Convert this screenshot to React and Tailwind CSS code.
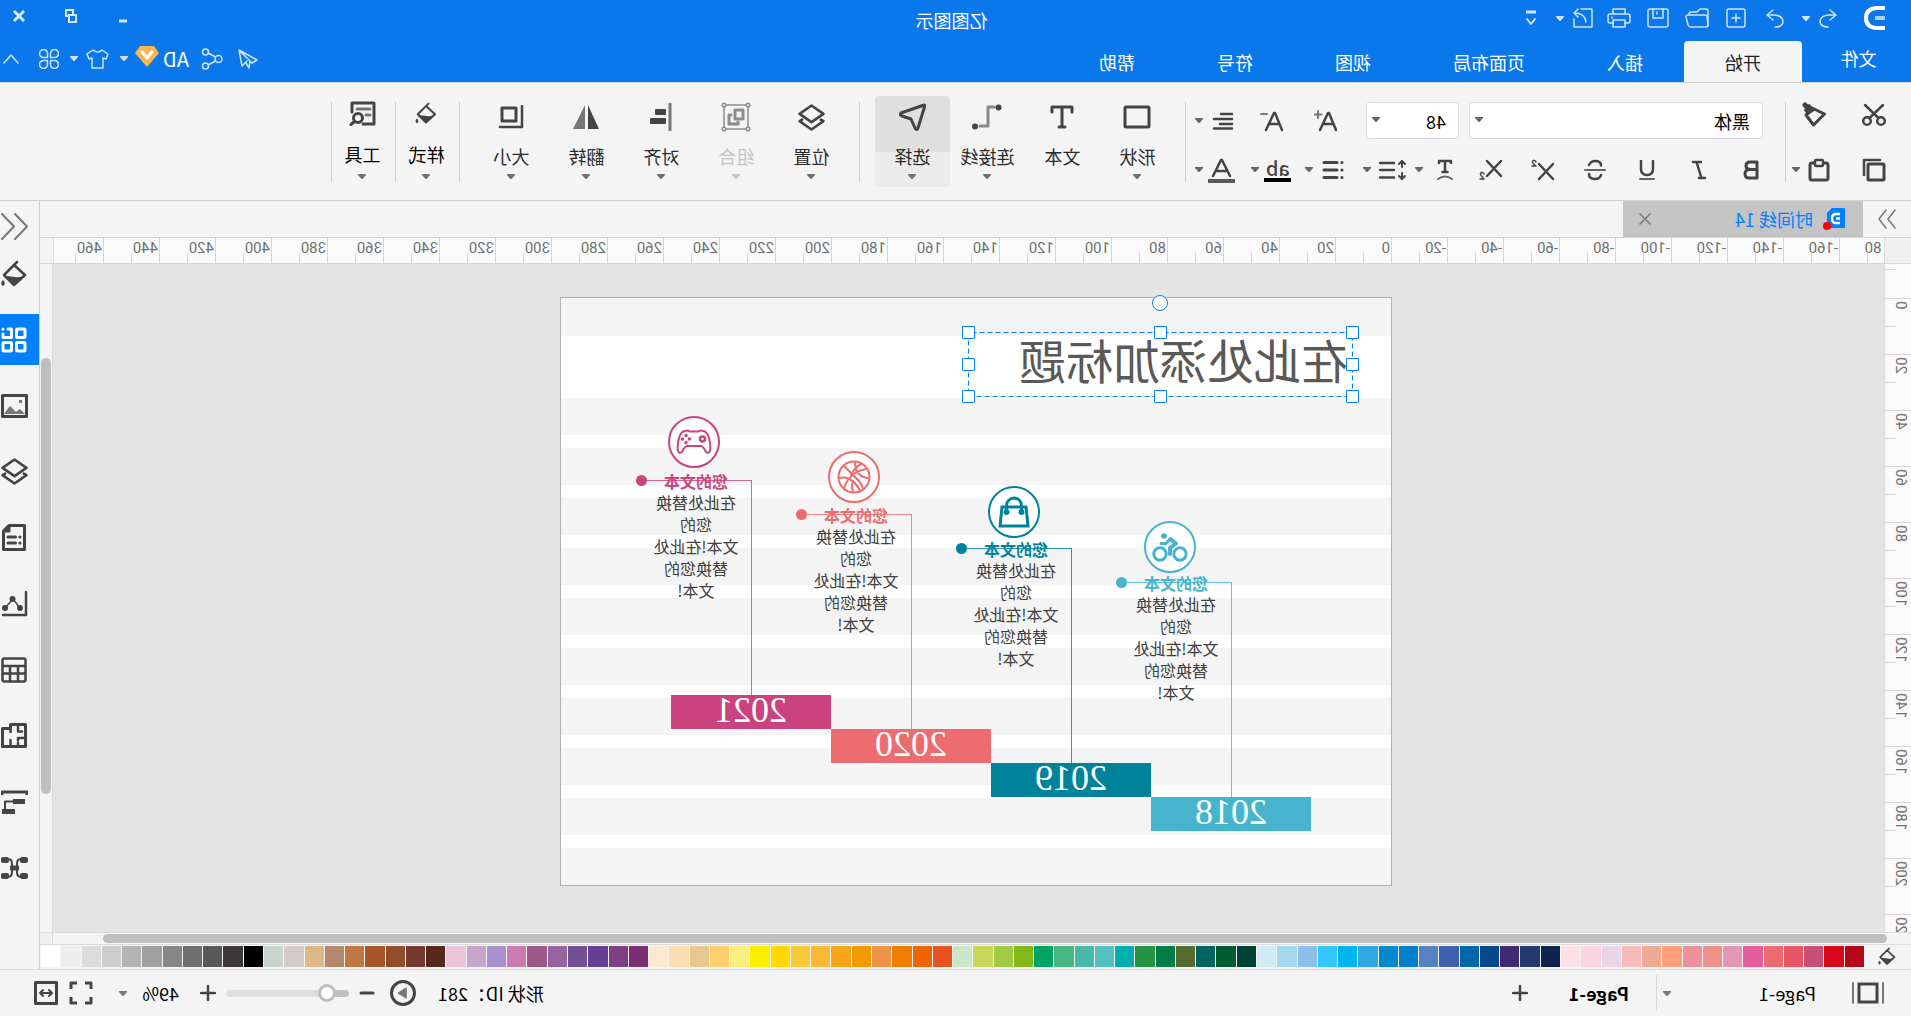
import { useState } from "react";
import clsx from "clsx";

const menuTabs = ["插入", "页面布局", "视图", "符号", "帮助"];

const timeline = [
    { year: "2018", color: "#46b4cd", left: 80, top: 280, iconLeft: 195, iconTop: 223, icon: "bike" },
    { year: "2019", color: "#00829b", left: 240, top: 246, iconLeft: 351, iconTop: 188, icon: "bag" },
    { year: "2020", color: "#ec6c70", left: 400, top: 212, iconLeft: 511, iconTop: 153, icon: "ball" },
    { year: "2021", color: "#cb437e", left: 560, top: 178, iconLeft: 671, iconTop: 118, icon: "gamepad" },
];

const palette = [
    "#b30818", "#d9081c", "#c75078", "#e85464", "#ec6b70", "#e55d9a", "#e397b4", "#ee8f88", "#f0909c", "#ffa07a",
    "#f0a993", "#f6bcbc", "#ead4e8", "#fdd4e4", "#fde0e6", "#0f234f", "#243970", "#402a74", "#04478c", "#0068a6",
    "#3f60ac", "#5583c2", "#0080cc", "#0089cf", "#2ea7e3", "#00b4f0", "#33c8fb", "#8cc0ea", "#a3d8ee", "#d0eaf6",
    "#004035", "#005b30", "#006560", "#566b30", "#007d45", "#259445", "#00aeb0", "#54c0c0", "#48b9a8", "#48b883",
    "#00a566", "#82b818", "#a0cb44", "#c8d75a", "#cbe6c8", "#e8521f", "#ec6500", "#ee7d00", "#ef9447", "#f39a00",
    "#f7a61c", "#fbb933", "#f9c938", "#ffd900", "#ffed00", "#fbee82", "#fecf70", "#e8c88f", "#fbddb0", "#fde8d0",
    "#7b2f72", "#803f83", "#654096", "#745196", "#97659e", "#9c5888", "#cc7bb0", "#a890cf", "#c6a5c8", "#ebc3da",
    "#58281c", "#743a30", "#924e2c", "#a85628", "#c07840", "#b4886e", "#deb887", "#d4ccc8", "#c9d4cc", "#000000",
    "#3e3939", "#595758", "#6f6f6f", "#878787", "#9ea09f", "#b2b5b4", "#cdcfce", "#dcdcdc", "#eeeeee", "#ffffff",
];

const hMarks = Array.from({ length: 33 }, (_, i) => -180 + i * 20);
const vMarks = Array.from({ length: 12 }, (_, i) => i * 20);

function Icon({ w = 24, h = 24, sw = 2, children, className }) {
    return (
        <svg
            width={w}
            height={h}
            viewBox={`0 0 ${w} ${h}`}
            fill="none"
            stroke="currentColor"
            strokeWidth={sw}
            strokeLinecap="round"
            strokeLinejoin="round"
            className={clsx("shrink-0", className)}
            aria-hidden="true"
        >
            {children}
        </svg>
    );
}

function Caret({ className }) {
    return (
        <svg width="8" height="5" viewBox="0 0 8 5" className={clsx("shrink-0", className)} aria-hidden="true">
            <path d="M0 0H8V1L4.500 5H3.500L0 1Z" fill="currentColor" />
        </svg>
    );
}

function IconButton({ label, className, children }) {
    return (
        <button aria-label={label} className={clsx("flex items-center justify-center", className)}>
            {children}
        </button>
    );
}

function Divider() {
    return <div className="mt-[19px] h-20 w-px shrink-0 bg-[#cfcfcf]" />;
}

const FillBucket = ({ w = 26, h = 28 }) => (
    <svg width={w} height={h} viewBox="0 0 26 28" fill="none" stroke="currentColor" strokeWidth="2.500" strokeLinejoin="round" strokeLinecap="round" className="shrink-0" aria-hidden="true">
        <path d="M10 2L13 5M13 5L23 15L13 25L2 15Z" />
        <path d="M2 15.500Q7 18 12 17Q18 16 23.500 16L13 26Z" fill="currentColor" stroke="none" />
        <path d="M24 21Q26 24 24 25Q22 24 24 21Z" fill="currentColor" strokeWidth="1.500" />
    </svg>
);

const Layers = ({ w = 26 }) => (
    <svg width={w} height={w} viewBox="0 0 26 26" fill="none" stroke="currentColor" strokeWidth="2.500" strokeLinejoin="round" strokeLinecap="round" className="shrink-0" aria-hidden="true">
        <path d="M13 1.500L24.500 9.500L13 17.500L1.500 9.500Z" />
        <path d="M4 15L1.500 16.500L13 24.500L24.500 16.500L22 15" />
    </svg>
);

function TitleBar() {
    return (
        <div className="flex h-9 items-center">
            <div className="flex flex-1 items-center">
                <Icon w={22} h={24} sw={4} className="ml-[25px] mr-[19px] text-white">
                    <path d="M1 2H10Q20 3 20 12Q20 21 10 22H1" strokeLinecap="butt" />
                    <path d="M1 12H11" stroke="#a9d0f8" strokeLinecap="butt" />
                </Icon>
                <div className="flex items-center text-[#cfe4fb]">
                    <IconButton label="撤销" className="w-[33px]">
                        <Icon w={18} h={20} sw={1.5}>
                            <path d="M7 2L1 7L7 12M1 7H9Q17 8 17 14Q16 19 9 19" />
                        </Icon>
                    </IconButton>
                    <IconButton label="撤销列表" className="w-3"><Caret /></IconButton>
                    <IconButton label="恢复" className="ml-1.5 w-[38px]">
                        <Icon w={18} h={20} sw={1.5}>
                            <path d="M11 2L17 7L11 12M17 7H9Q1 8 1 14Q2 19 9 19" />
                        </Icon>
                    </IconButton>
                    <IconButton label="新建" className="w-[39px]">
                        <Icon w={20} h={20} sw={1.5}>
                            <rect x="1" y="1" width="18" height="18" rx="2" />
                            <path d="M10 6V14M6 10H14" />
                        </Icon>
                    </IconButton>
                    <IconButton label="打开" className="w-[39px]">
                        <Icon w={24} h={20} sw={1.5}>
                            <path d="M1 17V3Q1 1 3 1H9L12 4H18Q20 4 20 7" />
                            <path d="M4 7H21Q23 7 23 9L21 17Q20 19 18 19H3Q1 19 1 17L2 9Q2 7 4 7Z" />
                        </Icon>
                    </IconButton>
                    <IconButton label="保存" className="w-[39px]">
                        <Icon w={22} h={20} sw={1.5}>
                            <rect x="1" y="1" width="20" height="18" rx="2" />
                            <path d="M6 1V10H16V1M12 4V6" />
                        </Icon>
                    </IconButton>
                    <IconButton label="打印" className="w-[39px]">
                        <Icon w={24} h={20} sw={1.5}>
                            <path d="M6 6V1H18V6M6 15H3Q1 15 1 13V8Q1 6 3 6H21Q23 6 23 8V13Q23 15 21 15H18" />
                            <rect x="6" y="12" width="12" height="7" />
                            <path d="M19 9V10" />
                        </Icon>
                    </IconButton>
                    <IconButton label="导出" className="w-[34px]">
                        <Icon w={20} h={20} sw={1.5}>
                            <path d="M12 1H1V19H19V11M15 1L19 5L15 9M19 5Q8 5 7 14" />
                        </Icon>
                    </IconButton>
                    <IconButton label="导出选项" className="w-3"><Caret /></IconButton>
                    <IconButton label="自定义" className="w-[46px]">
                        <Icon w={12} h={16}>
                            <path d="M1 2H11" strokeLinecap="butt" strokeWidth="3" />
                            <path d="M2 9L6 14L10 9" />
                        </Icon>
                    </IconButton>
                </div>
            </div>
            <h1 className="pl-2 pt-1 text-lg leading-6 text-white">亿图图示</h1>
            <div className="flex flex-1 items-center justify-end text-[#d6e8fc]">
                <IconButton label="最小化" className="h-7 w-10">
                    <Icon w={10} h={12} sw={3}><path d="M1 9H9" strokeLinecap="butt" /></Icon>
                </IconButton>
                <IconButton label="还原" className="ml-3 h-7 w-10 pb-1">
                    <Icon w={12} h={14}>
                        <rect x="4" y="1" width="7" height="6" strokeLinejoin="miter" />
                        <rect x="1" y="6" width="7" height="7" fill="#0a78eb" strokeLinejoin="miter" />
                    </Icon>
                </IconButton>
                <IconButton label="关闭" className="mr-px ml-2.5 h-7 w-10 pb-1 pl-1">
                    <Icon w={12} h={12} sw={3}><path d="M2 2L10 10M10 2L2 10" strokeLinecap="square" /></Icon>
                </IconButton>
            </div>
        </div>
    );
}

function MenuBar() {
    return (
        <nav className="flex h-[46px] items-end text-lg text-white">
            <button className="h-full w-[109px] pb-0.5 pr-1">文件</button>
            <button className="h-[41px] w-[118px] shrink-0 rounded-t-sm bg-[#f4f4f4] text-[#222]">开始</button>
            {menuTabs.map((tab) => (
                <button key={tab} className="h-[41px] shrink-0 px-[41px]">{tab}</button>
            ))}
            <div className="ml-auto flex h-full items-center pb-px pr-[3px] text-[#cfe4fb]">
                <IconButton label="发送">
                    <Icon w={20} h={20} sw={1.5}>
                        <path d="M19 1L1 11L6 14L19 1L16 17L11 12M8 12L9 19L12 14" />
                    </Icon>
                </IconButton>
                <IconButton label="分享" className="ml-[15px]">
                    <Icon w={22} h={22} sw={1.5}>
                        <circle cx="4.500" cy="11" r="3.500" />
                        <circle cx="17.500" cy="4" r="3" />
                        <circle cx="17.500" cy="18" r="3" />
                        <path d="M7.500 9L15 5M7.500 13L15 17" />
                    </Icon>
                </IconButton>
                <button className="ml-3 text-xl leading-6 text-white">AD</button>
                <IconButton label="会员" className="ml-1 pb-1">
                    <Icon w={24} h={22} sw={3}>
                        <path d="M5 0H19L24 7L12 21L0 7Z" fill="#f8b84e" stroke="none" />
                        <path d="M7 6L12 12L17 6" stroke="#fff" />
                    </Icon>
                </IconButton>
                <IconButton label="会员菜单" className="ml-[7px]"><Caret /></IconButton>
                <IconButton label="皮肤" className="ml-[11px]">
                    <Icon w={23} h={20} sw={1.5}>
                        <path d="M7 1Q11 5 16 1L22 5L20 10L17 9V19H6V9L3 10L1 5Z" />
                    </Icon>
                </IconButton>
                <IconButton label="皮肤菜单" className="ml-2"><Caret /></IconButton>
                <IconButton label="应用" className="ml-[11px]">
                    <Icon w={20} h={20} sw={1.5}>
                        <path d="M8.500 8.500H5A4 4 0 1 1 8.500 5ZM11.500 8.500V5A4 4 0 1 1 15 8.500ZM8.500 11.500V15A4 4 0 1 1 5 11.500ZM11.500 11.500H15A4 4 0 1 1 11.500 15Z" />
                    </Icon>
                </IconButton>
                <IconButton label="收起功能区" className="ml-5">
                    <Icon w={16} h={10} sw={1.5}><path d="M1 9L8 1L15 9" /></Icon>
                </IconButton>
            </div>
        </nav>
    );
}

function ToolButton({ label, caret = true, active, disabled, compact, children }) {
    return (
        <button
            disabled={disabled}
            className={clsx(
                "mt-[13px] flex h-[91px] shrink-0 flex-col items-center rounded-sm",
                compact ? "w-[63px] pl-0.5 text-black" : "w-[75px] text-[#2b2b2b]",
                active && "bg-[linear-gradient(#dfdfdf_56px,#ebebeb_56px)]"
            )}
        >
            <span className={clsx("flex items-center justify-center text-[#444]", compact ? "h-[34px]" : "h-[42px]")}>
                {children}
            </span>
            <span className={clsx("text-lg leading-6", compact ? "mt-3" : "mt-1.5", disabled && "text-[#c4c4c4]")}>{label}</span>
            {caret && <Caret className={clsx(compact ? "mt-2" : "mt-1.5", disabled ? "text-[#c4c4c4]" : "text-[#707070]")} />}
        </button>
    );
}

function ClipboardGroup() {
    return (
        <div className="flex w-[125px] shrink-0 flex-col gap-3 pl-[21px] pt-[19px] text-[#444]">
            <div className="flex h-[37px] items-center">
                <IconButton label="剪切" className="w-8 pb-3">
                    <Icon w={24} h={24}>
                        <circle cx="5" cy="18" r="3.800" strokeWidth="2.500" />
                        <circle cx="19" cy="18" r="3.800" strokeWidth="2.500" />
                        <path d="M3 2L16.500 15M21 2L7.500 15" strokeWidth="2.500" />
                    </Icon>
                </IconButton>
                <IconButton label="格式刷" className="ml-7 w-8 pb-3">
                    <Icon w={24} h={25}>
                        <path d="M1.500 12L14 6L20 13L12.500 23Z" strokeWidth="3" />
                        <path d="M12 8L17 3L21 8L18 12Z" fill="currentColor" />
                        <path d="M18 6L21 3" strokeWidth="5" />
                    </Icon>
                </IconButton>
            </div>
            <div className="flex h-[37px] items-center">
                <IconButton label="复制" className="w-8">
                    <Icon w={24} h={24} sw={3}>
                        <rect x="2" y="6" width="16" height="16" rx="1" />
                        <path d="M6 2H22V17" strokeWidth="2.500" />
                    </Icon>
                </IconButton>
                <IconButton label="粘贴" className="ml-[23px] w-8">
                    <Icon w={22} h={24} sw={3}>
                        <rect x="2" y="5" width="18" height="17" rx="2" />
                        <rect x="7" y="2" width="8" height="6" rx="1" strokeWidth="2.500" fill="#f4f4f4" />
                    </Icon>
                </IconButton>
                <IconButton label="粘贴选项" className="w-3.5 text-[#666]"><Caret /></IconButton>
            </div>
        </div>
    );
}

function FontGroup() {
    const [font, setFont] = useState("黑体");
    const [size, setSize] = useState("48");

    return (
        <div className="flex w-[599px] shrink-0 flex-col gap-3 pl-2 pt-[19px] text-[#444]">
            <div className="ml-3.5 flex h-[37px] items-center">
                <div className="relative">
                    <select
                        aria-label="字体"
                        value={font}
                        onChange={(e) => setFont(e.target.value)}
                        className="h-[37px] w-[294px] appearance-none rounded-sm border border-[#dcdcdc] bg-white pl-3 text-lg text-black"
                    >
                        <option>黑体</option>
                        <option>宋体</option>
                    </select>
                    <Caret className="pointer-events-none absolute right-1.5 top-[15px] text-[#666]" />
                </div>
                <div className="relative ml-2.5">
                    <select
                        aria-label="字号"
                        value={size}
                        onChange={(e) => setSize(e.target.value)}
                        className="h-[37px] w-[93px] appearance-none rounded-sm border border-[#dcdcdc] bg-white pl-3 text-lg text-black"
                    >
                        <option>48</option>
                        <option>36</option>
                    </select>
                    <Caret className="pointer-events-none absolute right-1.5 top-[15px] text-[#666]" />
                </div>
                <IconButton label="增大字号" className="ml-6 w-8">
                    <Icon w={24} h={22} sw={2.5}>
                        <path d="M2 20L9 3H10L18 20M5 14H15" />
                        <path d="M20 1V8M16.500 4.500H23.500" stroke="#777" strokeWidth="2" />
                    </Icon>
                </IconButton>
                <IconButton label="减小字号" className="ml-[22px] w-8">
                    <Icon w={24} h={22} sw={2.5}>
                        <path d="M2 20L9 3H10L18 20M5 14H15" />
                        <path d="M17 4H23" stroke="#777" strokeWidth="2" />
                    </Icon>
                </IconButton>
                <IconButton label="对齐方式" className="ml-[17px] w-8">
                    <Icon w={22} h={18} sw={2.5}>
                        <path d="M2 2H13M2 7H20M2 12H14M2 16.500H20" />
                    </Icon>
                </IconButton>
                <IconButton label="对齐选项" className="w-4 text-[#666]"><Caret /></IconButton>
            </div>
            <div className="flex h-[37px] items-center">
                <IconButton label="加粗" className="w-[52px]">
                    <Icon w={16} h={20} sw={3}><path d="M2 2H9Q13 2 13 6Q13 9 9 9.500H2ZM2 9.500H10Q14 10 14 14Q14 18 10 18H2Z" /></Icon>
                </IconButton>
                <IconButton label="倾斜" className="w-[52px]">
                    <Icon w={16} h={20} sw={2.5}><path d="M6 2H14M2 18H8M10.500 2L5.500 18" /></Icon>
                </IconButton>
                <IconButton label="下划线" className="w-[52px]">
                    <Icon w={16} h={20}><path d="M2 1V9Q2 15 8 15Q14 15 14 9V1" strokeWidth="2.500" /><path d="M1 19H15" stroke="#666" /></Icon>
                </IconButton>
                <IconButton label="删除线" className="w-[52px]">
                    <Icon w={22} h={22} sw={2.5}>
                        <path d="M17 6Q15 2 11 2Q5 2 5 6.500M17 15Q17 20 11 20Q6 20 5 16" />
                        <path d="M1 11H21" strokeWidth="2" stroke="#666" />
                    </Icon>
                </IconButton>
                <IconButton label="上标" className="w-[52px]">
                    <Icon w={24} h={22} sw={2.5}>
                        <path d="M2 5L16 20M16 5L2 20" />
                        <path d="M19 3Q21 0 22.500 2.500Q23 4 19 7H23" strokeWidth="1.500" />
                    </Icon>
                </IconButton>
                <IconButton label="下标" className="w-[52px]">
                    <Icon w={24} h={22} sw={2.5}>
                        <path d="M2 2L16 17M16 2L2 17" />
                        <path d="M19 15Q21 12 22.500 14.500Q23 16 19 20H23" strokeWidth="1.500" />
                    </Icon>
                </IconButton>
                <IconButton label="文字效果" className="w-10">
                    <Icon w={18} h={22} sw={2.500}>
                        <path d="M3 4V2H15V4M9 2V12M6.500 13H11.500" />
                        <path d="M2 20Q9 15 16 20" strokeWidth="2" stroke="#666" />
                    </Icon>
                </IconButton>
                <IconButton label="文字效果选项" className="w-3 text-[#666]"><Caret /></IconButton>
                <IconButton label="行距" className="w-10">
                    <Icon w={28} h={22} sw={2.5}>
                        <path d="M5 2V8M5 20V14" strokeWidth="2" />
                        <path d="M2 5L5 2L8 5M2 17L5 20L8 17" strokeWidth="2" />
                        <path d="M13 4H27M13 11H27M13 18.500H27" />
                    </Icon>
                </IconButton>
                <IconButton label="行距选项" className="w-3 text-[#666]"><Caret /></IconButton>
                <IconButton label="项目符号" className="ml-2.5 w-9">
                    <Icon w={22} h={20} sw={3}>
                        <path d="M2 2.500H2.100M2 10H2.100M2 17.500H2.100M7 2.500H20M7 10H20M7 17.500H20" />
                    </Icon>
                </IconButton>
                <IconButton label="项目符号选项" className="w-3 text-[#666]"><Caret /></IconButton>
                <button aria-label="突出显示" className="ml-2 w-[34px]">
                    <span className="mx-auto block w-[27px] border-b-4 border-black text-center text-xl font-medium leading-5">ab</span>
                </button>
                <IconButton label="突出显示选项" className="w-3 text-[#666]"><Caret /></IconButton>
                <IconButton label="字体颜色" className="ml-2.5 w-[34px]">
                    <Icon w={27} h={26} sw={3}>
                        <path d="M5 19L13 3H14L22 19M8 14H19" strokeWidth="2.500" />
                        <path d="M0 24H27" strokeWidth="4" strokeLinecap="butt" stroke="#595959" />
                    </Icon>
                </IconButton>
                <IconButton label="字体颜色选项" className="w-3 text-[#666]"><Caret /></IconButton>
            </div>
        </div>
    );
}

function Ribbon() {
    return (
        <div className="flex h-[119px] shrink-0 border-y border-[#d0d0d0] bg-[#f4f4f4]">
            <ClipboardGroup />
            <Divider />
            <FontGroup />
            <Divider />
            <div className="ml-2.5 mr-[15px] flex">
                <ToolButton label="形状">
                    <Icon w={28} h={24} sw={3}><rect x="2" y="2" width="24" height="20" rx="1" strokeLinejoin="miter" /></Icon>
                </ToolButton>
                <ToolButton label="文本" caret={false}>
                    <Icon w={24} h={24} sw={3}><path d="M2 7V2H22V7M12 2V22M9 22H15" /></Icon>
                </ToolButton>
                <ToolButton label="连接线">
                    <Icon w={30} h={26}>
                        <path d="M8 3H14V22H22" stroke="#888" strokeWidth="3" />
                        <circle cx="3.500" cy="3.500" r="3" fill="currentColor" stroke="none" />
                        <circle cx="27" cy="22.500" r="3" fill="currentColor" stroke="none" />
                    </Icon>
                </ToolButton>
                <ToolButton label="选择" active>
                    <Icon w={27} h={28} sw={3}><path d="M2 2L25 10Q27 12 24 13L15 16L11 25Q9 28 8 25L1.500 4Q1 2 2 2Z" /></Icon>
                </ToolButton>
            </div>
            <Divider />
            <div className="ml-2.5 mr-3.5 flex">
                <ToolButton label="位置"><Layers w={27} /></ToolButton>
                <ToolButton label="组合" disabled>
                    <Icon w={30} h={30} sw={1.5} className="text-[#8c8c8c]">
                        <path d="M4 3H26M4 27H26M3 4V26M27 4V26" />
                        <circle cx="3" cy="3" r="1.800" fill="#f4f4f4" />
                        <circle cx="27" cy="3" r="1.800" fill="#f4f4f4" />
                        <circle cx="3" cy="27" r="1.800" fill="#f4f4f4" />
                        <circle cx="27" cy="27" r="1.800" fill="#f4f4f4" />
                        <rect x="8" y="8" width="8" height="9" strokeWidth="3" />
                        <path d="M20 13H22V22H13V20" strokeWidth="3" />
                    </Icon>
                </ToolButton>
                <ToolButton label="对齐">
                    <Icon w={22} h={28}>
                        <path d="M2 1V27" stroke="#777" strokeWidth="3" />
                        <rect x="6" y="6" width="11" height="6" rx="1" fill="currentColor" stroke="none" />
                        <rect x="6" y="15" width="16" height="6" rx="1" fill="currentColor" stroke="none" />
                    </Icon>
                </ToolButton>
                <ToolButton label="翻转">
                    <Icon w={28} h={26}>
                        <path d="M12 1V25H1Z" fill="currentColor" stroke="none" />
                        <path d="M15 1V25H27Z" fill="#777" stroke="none" />
                    </Icon>
                </ToolButton>
                <ToolButton label="大小">
                    <Icon w={26} h={24} sw={3}>
                        <rect x="8" y="3" width="14" height="13" />
                        <path d="M2 1V22H24" strokeWidth="2.500" />
                    </Icon>
                </ToolButton>
            </div>
            <Divider />
            <ToolButton label="样式" compact><FillBucket w={22} h={23} /></ToolButton>
            <Divider />
            <ToolButton label="工具" compact>
                <Icon w={27} h={25} sw={3}>
                    <path d="M13 23H2V2H24V11" />
                    <path d="M6 8H19M6 14H10" stroke="#777" />
                    <circle cx="18" cy="17" r="4.500" />
                    <path d="M21.500 20.500L25 23.500" />
                </Icon>
            </ToolButton>
            <Divider />
        </div>
    );
}

function DocumentTabs() {
    return (
        <div className="flex h-[37px] shrink-0 items-stretch border-b border-[#d6d6d6]">
            <IconButton label="展开左侧面板" className="w-12 text-[#777]">
                <Icon w={18} h={20} sw={1.5}><path d="M1 1L8 10L1 19M10 1L17 10L10 19" /></Icon>
            </IconButton>
            <div className="flex w-60 items-center bg-[#c4c4c4] pl-[18px] pr-4 text-lg text-[#0080ff]">
                <Icon w={22} h={22}>
                    <path d="M1 0H13L18 5V20H0V1Z" fill="#0080ff" stroke="none" />
                    <path d="M5 6H9Q13 6 13 10.500Q13 15 9 15H5M5 10.500H9" stroke="#fff" strokeWidth="2.500" strokeLinecap="butt" />
                    <circle cx="18" cy="18" r="4" fill="#f00" stroke="none" />
                </Icon>
                <button className="ml-2.5">时间线 14</button>
                <IconButton label="关闭标签" className="ml-auto text-[#777]">
                    <Icon w={12} h={12} sw={1.5}><path d="M1 1L11 11M11 1L1 11" /></Icon>
                </IconButton>
            </div>
        </div>
    );
}

function HorizontalRuler() {
    return (
        <div className="flex h-[26px] shrink-0 border-b border-[#d6d6d6]">
            <div className="w-[26px] shrink-0 bg-[#efefef]" />
            <div className="flex flex-1 overflow-hidden border-x border-[#dcdcdc] bg-[#fafafa]">
                <div className="-ml-3 flex">
                    {hMarks.map((mark) => (
                        <div key={mark} className="relative w-14 shrink-0 border-l border-[#d6d6d6] pl-px pt-px font-[Roboto,sans-serif] text-[15px] leading-[18px] text-[#707070]">
                            {mark}
                            <span className="absolute bottom-0 left-[27px] h-[11px] w-px bg-[#d6d6d6]" />
                        </div>
                    ))}
                </div>
            </div>
            <div className="w-[13px] shrink-0" />
        </div>
    );
}

function VerticalRuler() {
    return (
        <div className="w-[27px] shrink-0 overflow-hidden border-r border-[#dcdcdc] bg-[#fafafa]">
            <div className="mb-[28px] ml-auto mt-[5px] h-px w-[11px] bg-[#d6d6d6]" />
            {vMarks.map((mark) => (
                <div key={mark} className="relative flex h-14 flex-col items-start border-t border-[#d6d6d6] pl-px pt-0.5">
                    <span className="rotate-180 font-[Roboto,sans-serif] text-[15px] leading-[18px] text-[#707070] [writing-mode:vertical-rl]">
                        {mark}
                    </span>
                    <span className="absolute right-0 top-[27px] h-px w-[11px] bg-[#d6d6d6]" />
                </div>
            ))}
        </div>
    );
}

function TimelineIcon({ name }) {
    if (name === "bike") {
        return (
            <Icon w={36} h={30} sw={3}>
                <circle cx="8" cy="22" r="6.200" />
                <circle cx="28" cy="22" r="6.200" />
                <circle cx="24" cy="4" r="2.800" fill="currentColor" stroke="none" />
                <path d="M17.500 7L12 11.500L18 16V22" strokeWidth="4" />
                <path d="M18 7L22 11.500H27" />
            </Icon>
        );
    }
    if (name === "bag") {
        return (
            <Icon w={32} h={32} sw={3}>
                <path d="M4 11H28L30 30H2Z" strokeLinejoin="miter" />
                <path d="M8.500 16V9.500A7.500 7.500 0 0 1 23.500 9.500V16" />
                <circle cx="8.500" cy="16" r="1.500" fill="currentColor" />
                <circle cx="23.500" cy="16" r="1.500" fill="currentColor" />
            </Icon>
        );
    }
    if (name === "ball") {
        return (
            <Icon w={34} h={34}>
                <circle cx="17" cy="17" r="15.500" />
                <path d="M16 2Q16 10 12 14Q8 18 2 18M27 6Q20 13 12 21Q9 24 8 29M5 9Q17 11 23 20Q27 26 27 29M10 4Q16 7 20 15M32 18Q24 16 17 22Q12 28 11 31M18 21Q20 26 18 32" />
            </Icon>
        );
    }
    return (
        <Icon w={36} h={28}>
            <path d="M9 3Q11 2 14 3.500H22Q25 2 27 3Q31 3 33 10Q35 17 34 23Q33 26 30 24Q27 18 25 18H11Q9 18 6 24Q3 26 2 23Q1 17 3 10Q5 3 9 3Z" />
            <circle cx="9.500" cy="11" r="2.500" strokeWidth="2.500" />
            <path d="M26 7.500V7.600M26 14.500V14.600M22.500 11H22.600M29.500 11H29.600" strokeWidth="3.500" />
        </Icon>
    );
}

function TimelineItem({ year, color, left, top, iconLeft, iconTop, icon }) {
    return (
        <>
            {/* connector with its end dot */}
            <div className="absolute h-[221px] w-[116px]" style={{ left: left + 79, top, color }}>
                <div className="mt-1 h-[215px] w-28 border-l border-t border-current opacity-80" />
                <div className="absolute -top-px right-0 size-[11px] rounded-full bg-current" />
            </div>
            <div className="absolute flex size-[52px] items-center justify-center rounded-full border-2 border-current bg-white" style={{ left: iconLeft, top: iconTop, color }}>
                <TimelineIcon name={icon} />
            </div>
            <div className="absolute w-24 text-center text-base leading-[22px] text-[#404040]" style={{ left: left + 87, top: top - 6 }}>
                <p className="h-[21px] font-bold" style={{ color }}>您的文本</p>
                <p>在此处替换<br />您的<br />文本!在此处<br />替换您的<br />文本!</p>
            </div>
            <div
                className="absolute h-[34px] w-40 text-center font-['Liberation_Serif',serif] text-4xl leading-[30px] text-white"
                style={{ left, top: top + 219, backgroundColor: color }}
            >
                {year}
            </div>
        </>
    );
}

function Handle({ className }) {
    return <span className={clsx("absolute size-[13px] rounded-[1px] border border-[#0080ff] bg-white", className)} />;
}

function Canvas() {
    return (
        <main className="relative min-w-0 flex-1 overflow-hidden bg-[#e4e4e4]">
            <div className="absolute left-[492px] top-[33px] h-[589px] w-[832px] border border-[#b0b0b0] bg-white">
                <div className="flex h-full flex-col overflow-hidden">
                    <div className="h-[38px] shrink-0 bg-[#f4f4f4]" />
                    <div className="h-[62px] shrink-0" />
                    {Array.from({ length: 10 }, (_, i) => (
                        <div key={i} className="mb-[13px] h-[37px] shrink-0 bg-[#f4f4f4]" />
                    ))}
                </div>
                {timeline.map((item) => (
                    <TimelineItem key={item.year} {...item} />
                ))}
                <div className="absolute left-[38px] top-[34px] h-[65px] w-[385px]">
                    <h2 className="ml-[5px] h-[61px] whitespace-nowrap text-[47px] leading-[54px] text-[#595959]">在此处添加标题</h2>
                    <svg className="absolute inset-0 size-full" aria-hidden="true">
                        <path d="M.5 .5H384.500V64.500H.5Z" fill="none" stroke="#0080ff" strokeDasharray="5 3" />
                    </svg>
                    <span className="absolute -top-[37px] left-[185px] size-4 rounded-full border border-[#0080ff] bg-white" />
                    <Handle className="-left-1.5 -top-1.5" />
                    <Handle className="-top-1.5 left-[186px]" />
                    <Handle className="-right-1.5 -top-1.5" />
                    <Handle className="-left-1.5 top-[26px]" />
                    <Handle className="-right-1.5 top-[26px]" />
                    <Handle className="-bottom-1.5 -left-1.5" />
                    <Handle className="-bottom-1.5 left-[186px]" />
                    <Handle className="-bottom-1.5 -right-1.5" />
                </div>
            </div>
        </main>
    );
}

function Palette() {
    return (
        <div className="flex h-6 shrink-0 items-start pr-px pt-px">
            <div className="flex h-[21px] w-[47px] items-center justify-center text-[#444]">
                <FillBucket w={18} h={19} />
            </div>
            <div className="flex flex-1 gap-px">
                {palette.map((c) => (
                    <button key={c} aria-label={c} className="h-[21px] flex-1" style={{ backgroundColor: c }} />
                ))}
            </div>
        </div>
    );
}

const panelTools = [
    { name: "填充", icon: <FillBucket /> },
    {
        name: "符号库",
        active: true,
        icon: (
            <Icon w={26} h={26} sw={3}>
                <rect x="2" y="2" width="8.500" height="8.500" rx="1" />
                <path d="M15.500 2V10.500H24V7M19 2H15.500M24 2.200V2" />
                <rect x="2" y="15.500" width="8.500" height="8.500" rx="1" />
                <rect x="15.500" y="15.500" width="8.500" height="8.500" rx="1" />
            </Icon>
        ),
    },
    {
        name: "图片",
        icon: (
            <Icon w={27} h={24} sw={3}>
                <rect x="1.500" y="1.500" width="24" height="21" />
                <path d="M3 20L8 15L12 18L18 12L24 20Z" fill="#777" stroke="none" />
                <rect x="6" y="6" width="3" height="3" fill="#777" stroke="none" />
            </Icon>
        ),
    },
    { name: "图层", icon: <Layers w={27} /> },
    {
        name: "页面属性",
        icon: (
            <Icon w={24} h={27} sw={3}>
                <path d="M1.500 1.500H17L22.500 7V25.500H1.500Z" />
                <path d="M16 1V8H22" fill="currentColor" strokeWidth="1" />
                <path d="M6 13H6.100M10.500 13H18M6 19H6.100M10.500 19H18" />
            </Icon>
        ),
    },
    {
        name: "图表",
        icon: (
            <Icon w={27} h={26} sw={2.5}>
                <path d="M2 1V24H25" />
                <path d="M8 17L15 8L23 17" strokeWidth="1.500" />
                <circle cx="8" cy="17" r="3" fill="currentColor" stroke="none" />
                <circle cx="15.500" cy="8" r="3" fill="currentColor" stroke="none" />
                <circle cx="23" cy="17" r="3" fill="currentColor" stroke="none" />
            </Icon>
        ),
    },
    {
        name: "表格",
        icon: (
            <Icon w={26} h={26} sw={2.5}>
                <rect x="1.500" y="1.500" width="23" height="23" rx="2" />
                <path d="M2 9H24M2 16.500H24M9 9V24M17 9V24" />
            </Icon>
        ),
    },
    {
        name: "平面图",
        icon: (
            <Icon w={26} h={25} sw={3}>
                <path d="M1.500 1.500H16.500V5.500H24.500V23.500H1.500Z" />
                <path d="M16.500 5V9M9 2V8.500H5M16.500 17V23M2 15H9V17.500M9 20V23" strokeWidth="2.500" />
            </Icon>
        ),
    },
    {
        name: "甘特图",
        icon: (
            <Icon w={27} h={24}>
                <path d="M1 5V2H26V5" strokeWidth="3" strokeLinecap="butt" />
                <path d="M3 9H15V14H3ZM13 19H26V24H13Z" fill="currentColor" stroke="none" />
                <path d="M15 11.500H23V20" />
            </Icon>
        ),
    },
    {
        name: "思维导图",
        icon: (
            <Icon w={27} h={24}>
                <path d="M6 3.500H9Q11 4 11 8V16Q11 20 9 20.500H6M21 3.500H18Q16 4 16 8V16Q16 20 18 20.500H21" />
                <rect x="0" y="1" width="8" height="6" rx="2" fill="currentColor" stroke="none" />
                <rect x="19" y="1" width="8" height="6" rx="2" fill="currentColor" stroke="none" />
                <rect x="0" y="17" width="8" height="6" rx="2" fill="currentColor" stroke="none" />
                <rect x="19" y="17" width="8" height="6" rx="2" fill="currentColor" stroke="none" />
                <rect x="9" y="9.500" width="9" height="5" rx="1" fill="currentColor" stroke="none" />
            </Icon>
        ),
    },
];

function SidePanel() {
    return (
        <aside className="flex w-10 shrink-0 flex-col gap-[15px] overflow-hidden border-l border-[#cfcfcf] text-[#444]">
            <IconButton label="收起右侧面板" className="-mb-[9px] h-[41px] pl-3 pt-[9px] text-[#777]">
                <Icon w={30} h={27} sw={2}><path d="M13 1L1 13.500L13 26M26 1L14 13.500L26 26" /></Icon>
            </IconButton>
            {panelTools.map((tool) => (
                <button
                    key={tool.name}
                    aria-label={tool.name}
                    className={clsx("flex h-[51px] shrink-0 items-center justify-center pl-2.5", tool.active && "bg-[#0080ff] text-white")}
                >
                    {tool.icon}
                </button>
            ))}
        </aside>
    );
}

function StatusBar() {
    const [zoom, setZoom] = useState(49);

    return (
        <footer className="flex h-[47px] shrink-0 items-center border-t border-[#d9d9d9] text-lg text-black">
            <IconButton label="页面视图" className="ml-[26px] text-[#444]">
                <Icon w={34} h={24}>
                    <path d="M2 2V22M32 2V22" stroke="#777" />
                    <rect x="8" y="3" width="18" height="18" strokeWidth="3" strokeLinejoin="miter" />
                </Icon>
            </IconButton>
            <button className="ml-[35px] flex items-center">
                <span className="w-[145px] text-left">Page-1</span>
                <Caret className="text-[#777]" />
            </button>
            <div className="ml-1.5 h-9 w-px bg-[#d9d9d9]" />
            <button className="ml-[27px] font-bold">Page-1</button>
            <IconButton label="添加页面" className="ml-[41px] text-[#444]">
                <Icon w={16} h={16} sw={2.500}><path d="M8 1V15M1 8H15" /></Icon>
            </IconButton>
            <div className="ml-auto flex items-center text-[#444]">
                <span className="text-black">形状 ID：281</span>
                <IconButton label="播放" className="ml-[22px]">
                    <Icon w={26} h={26} sw={3}>
                        <circle cx="13" cy="13" r="11.500" />
                        <path d="M10 8L18 13L10 18Z" fill="#777" stroke="#777" strokeWidth="1" />
                    </Icon>
                </IconButton>
                <IconButton label="缩小" className="ml-[15px]">
                    <Icon w={16} h={16} sw={3}><path d="M2 8H14" /></Icon>
                </IconButton>
                <input
                    type="range"
                    aria-label="缩放"
                    min="0"
                    max="400"
                    value={zoom}
                    onChange={(e) => setZoom(Number(e.target.value))}
                    className="ml-2.5 h-[7px] w-[123px] appearance-none rounded-full bg-[linear-gradient(to_right,#c0c0c0_16%,#dfdfdf_16%)] [&::-webkit-slider-thumb]:size-[18px] [&::-webkit-slider-thumb]:appearance-none [&::-webkit-slider-thumb]:rounded-full [&::-webkit-slider-thumb]:border-[3px] [&::-webkit-slider-thumb]:border-[#bdbdbd] [&::-webkit-slider-thumb]:bg-white"
                />
                <IconButton label="放大" className="ml-2.5">
                    <Icon w={16} h={16} sw={2.500}><path d="M8 1V15M1 8H15" /></Icon>
                </IconButton>
                <span className="ml-[21px] w-[52px] text-black">{zoom}%</span>
                <Caret className="text-[#777]" />
                <IconButton label="全屏" className="ml-[26px]">
                    <Icon w={24} h={24} sw={3}><path d="M2 8V2H8M16 2H22V8M22 16V22H16M8 22H2V16" strokeLinecap="butt" /></Icon>
                </IconButton>
                <IconButton label="适应宽度" className="ml-[11px] mr-[34px]">
                    <Icon w={24} h={24} sw={3}>
                        <rect x="1.500" y="1.500" width="21" height="21" />
                        <path d="M7 12H17M9 9L6 12L9 15M15 9L18 12L15 15" strokeWidth="2" />
                    </Icon>
                </IconButton>
            </div>
        </footer>
    );
}

function App() {
    return (
        <div className="flex h-screen -scale-x-100 flex-col overflow-hidden bg-[#f4f4f4] font-['Noto_Sans_CJK_SC',sans-serif]">
            <header className="shrink-0 bg-[#0a78eb]">
                <TitleBar />
                <MenuBar />
            </header>
            <Ribbon />
            <div className="flex min-h-0 flex-1">
                <div className="flex min-w-0 flex-1 flex-col">
                    <DocumentTabs />
                    <HorizontalRuler />
                    <div className="flex min-h-0 flex-1">
                        <VerticalRuler />
                        <Canvas />
                        <div className="w-[13px] shrink-0 border-l border-[#dcdcdc] pl-px pt-[94px]">
                            <div className="h-[436px] w-2.5 rounded-full bg-[#bfbfbf]" />
                        </div>
                    </div>
                    <div className="flex h-[13px] shrink-0 items-center border-y border-[#dcdcdc]">
                        <div className="ml-6 mr-[50px] h-[9px] flex-1 rounded-full bg-[#bfbfbf]" />
                        <div className="h-full w-[13px] border-l border-[#dcdcdc] bg-[#efefef]" />
                    </div>
                    <Palette />
                </div>
                <SidePanel />
            </div>
            <StatusBar />
        </div>
    );
}

export default App;
